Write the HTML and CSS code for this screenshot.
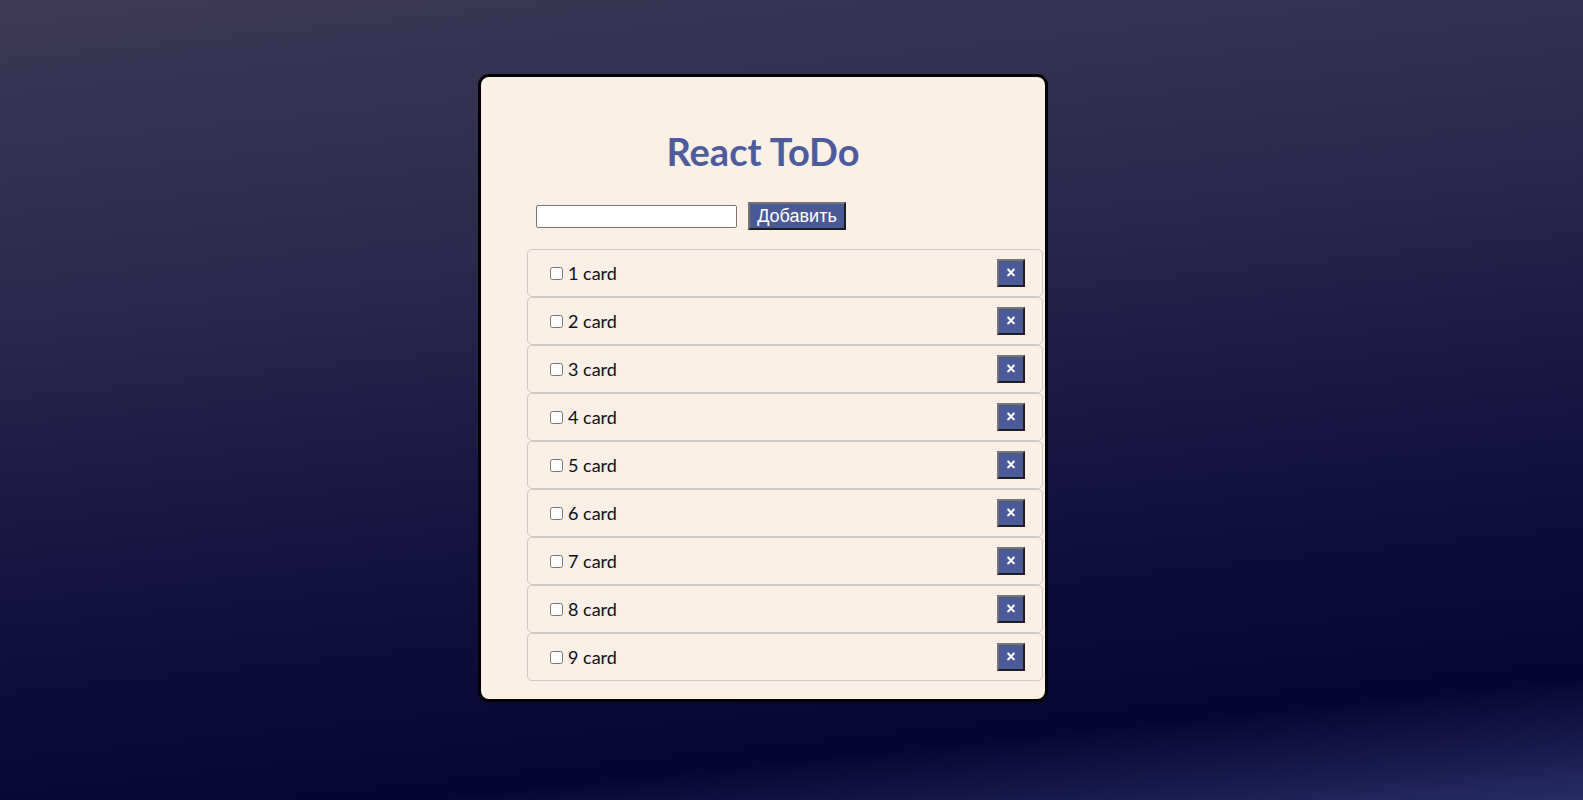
FILE: index.html
```html
<!DOCTYPE html>
<html lang="ru">
<head>
<meta charset="utf-8">
<title>React ToDo</title>
<link rel="stylesheet" href="styles.css">
</head>
<body>
<main class="card">
  <h1 class="title">React ToDo</h1>
  <form class="add-form">
    <input class="add-input" type="text">
    <button class="add-btn" type="button">Добавить</button>
  </form>
  <ul class="list">
    <li class="item"><label class="item-label"><input type="checkbox" class="check"><span>1 card</span></label><button class="del" type="button">×</button></li>
    <li class="item"><label class="item-label"><input type="checkbox" class="check"><span>2 card</span></label><button class="del" type="button">×</button></li>
    <li class="item"><label class="item-label"><input type="checkbox" class="check"><span>3 card</span></label><button class="del" type="button">×</button></li>
    <li class="item"><label class="item-label"><input type="checkbox" class="check"><span>4 card</span></label><button class="del" type="button">×</button></li>
    <li class="item"><label class="item-label"><input type="checkbox" class="check"><span>5 card</span></label><button class="del" type="button">×</button></li>
    <li class="item"><label class="item-label"><input type="checkbox" class="check"><span>6 card</span></label><button class="del" type="button">×</button></li>
    <li class="item"><label class="item-label"><input type="checkbox" class="check"><span>7 card</span></label><button class="del" type="button">×</button></li>
    <li class="item"><label class="item-label"><input type="checkbox" class="check"><span>8 card</span></label><button class="del" type="button">×</button></li>
    <li class="item"><label class="item-label"><input type="checkbox" class="check"><span>9 card</span></label><button class="del" type="button">×</button></li>
  </ul>
</main>
</body>
</html>
```

FILE: styles.css
```css
html, body {
  margin: 0;
  padding: 0;
  height: 100%;
}
body {
  background: linear-gradient(174deg, #3c3856 0%, #2c2a4c 30%, #12113d 65%, #060530 87%, #1a1d50 95%, #262d64 100%);
  font-family: "Lato", "Open Sans", sans-serif;
  display: flex;
  justify-content: flex-start;
  align-items: flex-start;
  padding: 74px 0 0 478px;
  box-sizing: border-box;
}
.card {
  width: 570px;
  box-sizing: border-box;
  background: #faf0e6;
  border: 3px solid #000;
  border-radius: 11px;
  padding: 52px 0 18px 46px;
}
.title {
  margin: 0;
  text-align: center;
  padding-right: 46px;
  font-family: "Lato", sans-serif;
  font-weight: 700;
  font-size: 38px;
  line-height: 44px;
  color: #4c5c9c;
}
.add-form {
  display: flex;
  align-items: center;
  margin: 29px 0 19px 9px;
  gap: 11px;
}
.add-input {
  width: 201px;
  height: 23px;
  box-sizing: border-box;
  border: 1px solid #767676;
  border-radius: 2px;
  background: #fff;
  padding: 0 4px;
  margin: 0;
}
.add-btn {
  height: 28px;
  width: 98px;
  box-sizing: border-box;
  margin: 0;
  padding: 0;
  background: #4a5a97;
  color: #fff;
  font-family: "Liberation Sans", Arial, sans-serif;
  font-size: 18px;
  line-height: 22px;
  border: 2px solid;
  border-color: #747474 #1e1e1e #1e1e1e #747474;
}
.list {
  list-style: none;
  margin: 0;
  padding: 0;
  width: 516px;
}
.item {
  height: 48px;
  box-sizing: border-box;
  border: 1px solid #cdcac6;
  border-radius: 5px;
  display: flex;
  align-items: center;
  justify-content: space-between;
  padding: 0 17px 0 22px;
}
.item-label {
  display: flex;
  align-items: center;
  font-size: 18px;
  color: #0d0d1a;
}
.check {
  width: 13px;
  height: 13px;
  margin: 0 5px 0 0;
}
.del {
  width: 28px;
  height: 28px;
  box-sizing: border-box;
  padding: 0;
  margin: 0;
  background: #4a5a97;
  color: #fff;
  font-family: "Liberation Sans", Arial, sans-serif;
  font-weight: 700;
  font-size: 16px;
  line-height: 20px;
  border: 2px solid;
  border-color: #747474 #1e1e1e #1e1e1e #747474;
}
```
